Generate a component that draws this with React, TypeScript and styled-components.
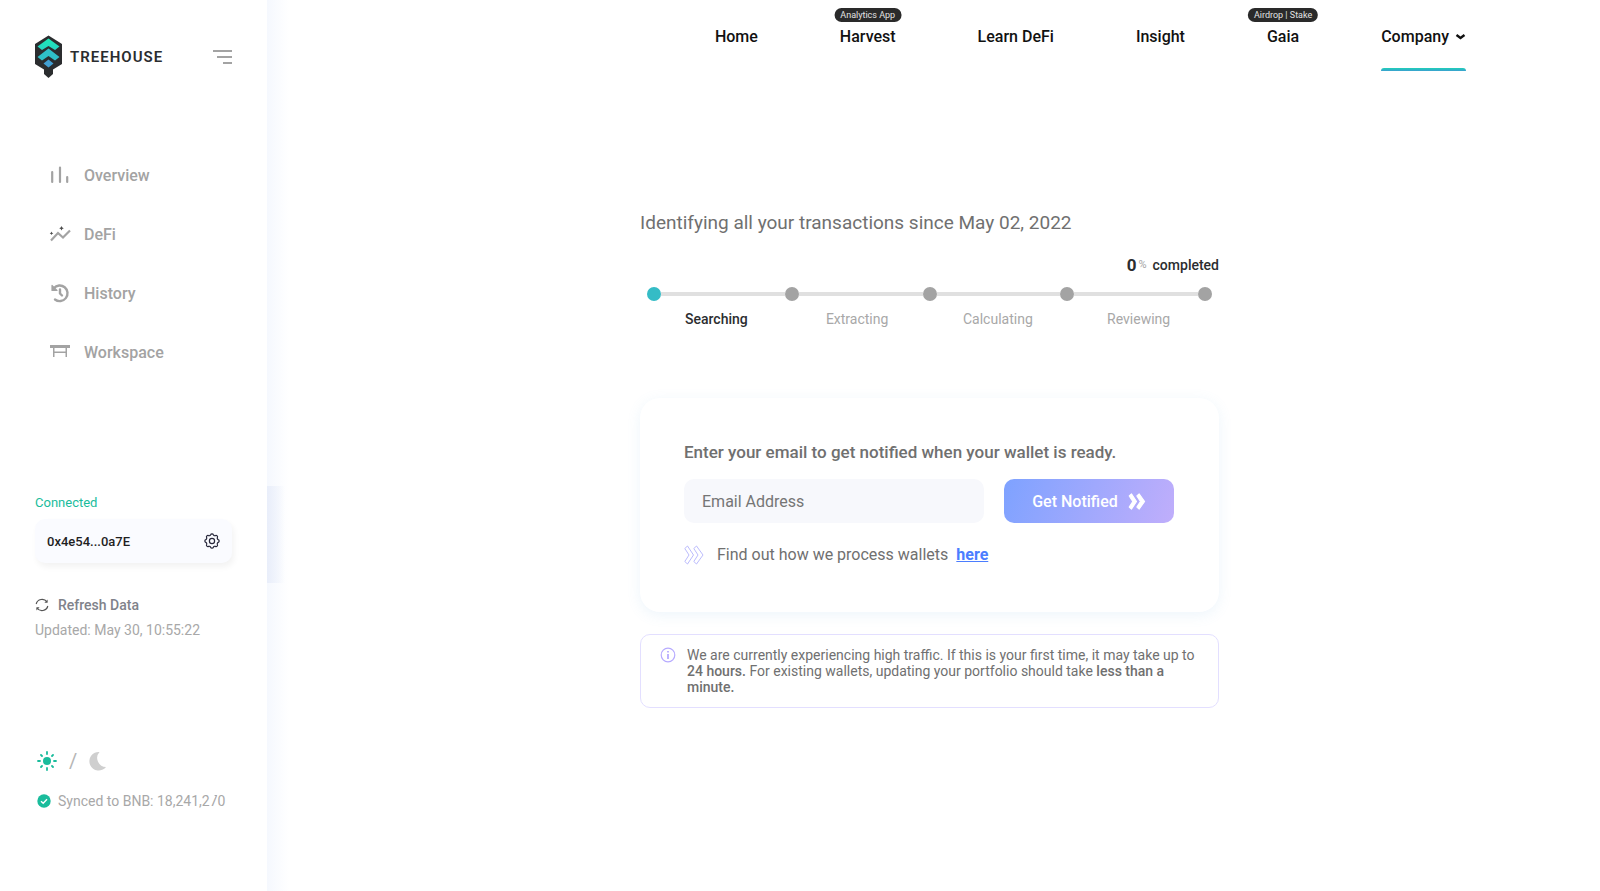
import React from "react";
import styled, { createGlobalStyle, css } from "styled-components";

const GlobalStyle = createGlobalStyle`
  *, *::before, *::after { box-sizing: border-box; }
  body {
    margin: 0;
    background: #fff;
    color: #707070;
    font-family: Roboto, "Liberation Sans", sans-serif;
    font-size: 16px;
  }
  button, input { font: inherit; }
  a { color: inherit; text-decoration: none; }
  h1, h2, p, ul, ol { margin: 0; padding: 0; font-weight: inherit; }
  ul, ol { list-style: none; }
  svg { display: block; flex: none; }
`;

const Page = styled.div`
  display: flex;
  min-height: 100vh;
`;

/* ---------- sidebar ---------- */

const Sidebar = styled.aside`
  display: flex;
  flex-direction: column;
  flex: 0 0 267px;
  padding: 35px 35px 0 35px;
`;

const BrandRow = styled.div`
  display: flex;
  align-items: center;
  height: 43px;
`;

const Brand = styled.a`
  display: flex;
  align-items: center;
  gap: 8px;
  color: #2b2d2f;
  font-size: 15px;
  font-weight: 600;
  letter-spacing: 1px;
`;

const IconButton = styled.button`
  display: flex;
  margin-left: auto;
  padding: 0;
  border: 0;
  background: none;
  cursor: pointer;
`;

const SideNav = styled.nav`
  padding-top: 76px;
  padding-left: 14px;
`;

const SideList = styled.ul`
  display: flex;
  flex-direction: column;
  gap: 17px;
`;

const SideLink = styled.a`
  display: flex;
  align-items: center;
  gap: 13px;
  height: 42px;
  color: #a3a3a3;
  font-weight: 500;
`;

const Wallet = styled.section`
  padding-top: 122px;
`;

const Connected = styled.p`
  color: #1abc9c;
  font-size: 13px;
  line-height: 16px;
`;

const WalletCard = styled.div`
  display: flex;
  align-items: center;
  height: 44px;
  margin-top: 8px;
  padding: 0 12px;
  border-radius: 10px;
  background: #fafbff;
  box-shadow: 2px 4px 6px rgba(0, 0, 0, 0.05);
  color: #1f1f1f;
  font-size: 13px;
  font-weight: 500;
`;

const Refresh = styled.button`
  display: flex;
  align-items: center;
  gap: 9px;
  margin-top: 32px;
  padding: 0;
  border: 0;
  background: none;
  color: #80828a;
  font-size: 14px;
  font-weight: 500;
  line-height: 20px;
  cursor: pointer;
`;

const Updated = styled.p`
  margin-top: 5px;
  color: #a8a8a8;
  font-size: 14px;
  line-height: 20px;
  white-space: nowrap;
`;

const ThemeSwitch = styled.div`
  display: flex;
  align-items: center;
  gap: 12px;
  margin-top: 109px;
  padding-left: 2px;
  color: #b5b5b5;
  font-size: 20px;
  line-height: 24px;
`;

const ThemeButton = styled(IconButton)`
  margin: 0;
`;

const Synced = styled.p`
  display: flex;
  align-items: center;
  gap: 7px;
  margin-top: 18px;
  padding-left: 2px;
  color: #a8a8a8;
  font-size: 14px;
  line-height: 20px;
  white-space: nowrap;
`;

/* a block-counter digit caught while it rolls over */
const RollingDigit = styled.span`
  display: inline-block;
  clip-path: polygon(62% 0, 100% 0, 100% 100%, 0 100%, 0 50%, 62% 34%);
`;

/* ---------- main column ---------- */

const Main = styled.div`
  flex: 1;
  min-width: 0;
  background:
    linear-gradient(90deg, #e9eefa, rgba(255, 255, 255, 0)) 0 486px / 18px 97px no-repeat,
    linear-gradient(90deg, #f5f8fe, #fff) 0 0 / 22px 100% no-repeat;
`;

const TopNav = styled.nav`
  padding-right: 134px;
`;

const TopList = styled.ul`
  display: flex;
  justify-content: flex-end;
  gap: 82px;
`;

const TopLink = styled.a<{ $active?: boolean }>`
  position: relative;
  display: flex;
  align-items: center;
  gap: 6px;
  height: 71px;
  padding-top: 2px;
  color: #111;
  font-weight: 500;
  ${(p) =>
    p.$active &&
    css`
      &::after {
        content: "";
        position: absolute;
        inset: auto 0 0;
        height: 3px;
        border-radius: 3px 3px 0 0;
        background: linear-gradient(#1fd1b8, #3b9fd0);
      }
    `}
`;

const Tag = styled.span`
  position: absolute;
  top: 8px;
  left: 50%;
  transform: translateX(-50%);
  padding: 0 6px;
  border-radius: 8px;
  background: #2a2a2a;
  color: #e2e2e2;
  font-size: 9px;
  font-weight: 400;
  line-height: 14px;
  white-space: nowrap;
`;

const ContentFrame = styled.div`
  padding-right: 8px;
`;

const Content = styled.main`
  width: 100%;
  max-width: 579px;
  margin: 0 auto;
  padding-top: 140px;
`;

const Title = styled.h1`
  font-size: 19px;
  line-height: 24px;
`;

const Completed = styled.p`
  display: flex;
  justify-content: flex-end;
  align-items: center;
  margin-top: 20px;
  color: #2b2d2f;
  font-size: 14px;
  font-weight: 500;
  line-height: 20px;
`;

const Percent = styled.b`
  font-size: 17px;
  font-weight: 700;
`;

const Unit = styled.span`
  margin: 0 6px 0 2px;
  color: #a3a3a3;
  font-size: 11px;
  font-weight: 400;
`;

const Track = styled.div`
  display: flex;
  align-items: center;
  margin-top: 12px;
  padding: 0 7px;
`;

const Dot = styled.span<{ $active?: boolean }>`
  flex: none;
  width: 14px;
  height: 14px;
  border-radius: 50%;
  background: ${(p) => (p.$active ? "#35bcc6" : "#a3a3a3")};
`;

const Segment = styled.span`
  flex: 1;
  height: 4px;
  background: #e0e0e0;
`;

const Steps = styled.ol`
  display: grid;
  grid-template-columns: repeat(4, 1fr);
  margin-top: 8px;
  padding: 0 10px 0 6px;
  font-size: 14px;
  line-height: 20px;
  text-align: center;
`;

const Step = styled.li<{ $active?: boolean }>`
  color: ${(p) => (p.$active ? "#2b2d2f" : "#a8a8a8")};
  font-weight: ${(p) => (p.$active ? 500 : 400)};
`;

const Card = styled.form`
  margin-top: 69px;
  padding: 44px 45px 46px 44px;
  border-radius: 20px;
  background: #fff;
  box-shadow: 0 3px 14px rgba(110, 170, 220, 0.12);
`;

const CardLabel = styled.label`
  display: block;
  font-size: 17px;
  font-weight: 500;
  line-height: 20px;
`;

const FieldRow = styled.div`
  display: flex;
  gap: 20px;
  margin-top: 17px;
`;

const EmailInput = styled.input`
  flex: 1;
  min-width: 0;
  height: 44px;
  padding: 0 18px;
  border: 0;
  border-radius: 10px;
  background: #f7f8fc;
  color: #707070;
  &::placeholder { color: #757575; opacity: 1; }
`;

const Submit = styled.button`
  display: flex;
  align-items: center;
  justify-content: center;
  gap: 10px;
  flex: 0 0 170px;
  height: 44px;
  padding: 0;
  border: 0;
  border-radius: 10px;
  background: linear-gradient(110deg, #7ea2ff, #c0aefb);
  color: #fff;
  font-weight: 500;
  cursor: pointer;
`;

const Hint = styled.p`
  display: flex;
  align-items: center;
  margin-top: 21px;
  line-height: 22px;
`;

const HintText = styled.span`
  margin: 0 8px 0 13px;
`;

const HintLink = styled.a`
  color: #4b7dff;
  font-weight: 700;
  text-decoration: underline;
`;

const Notice = styled.section`
  display: flex;
  gap: 11px;
  margin-top: 22px;
  padding: 12px 19px;
  border: 1px solid #e3dfff;
  border-radius: 10px;
  font-size: 14px;
  line-height: 16px;
`;

const Strong = styled.b`
  font-weight: 500;
`;

/* ---------- drawings ---------- */

const Logo = () => (
  <svg width="27" height="44" viewBox="0 0 27 44" aria-hidden="true">
    <defs>
      <linearGradient id="leaf" x1="0" y1="0" x2="0" y2="1">
        <stop offset="0" stopColor="#1de9b6" />
        <stop offset="1" stopColor="#26d4c4" />
      </linearGradient>
    </defs>
    <path d="M13.500 0.500 27 9v20L18 34.500v4.500L13.500 43 9 39v-4.500L0 29V9z" fill="#2b2d2f" />
    <path d="M13.500 3.500 24.500 11.500 20 15l-6.500-4L7 15l-4.500-3.500z" fill="url(#leaf)" />
    <path d="M13.500 13.500 24.500 22 20 25.500l-6.500-4.500L7 25.500 2.500 22z" fill="#2fc0c8" />
    <path d="M13.500 24.500 18.500 28.500l-5 4-5-4z" fill="#429fd2" />
  </svg>
);

const MenuIcon = () => (
  <svg width="19" height="14" viewBox="0 0 19 14" fill="#a3a3a3">
    <path d="M0 0h19v2H0zM4 6h15v2H4zM10 12h9v2h-9z" />
  </svg>
);

const OverviewIcon = () => (
  <svg width="22" height="22" viewBox="0 0 22 22" stroke="#a3a3a3" strokeWidth="2.200" strokeLinecap="round">
    <path d="M3.200 8v10M11 3.500V18M18.200 13v5" />
  </svg>
);

const DefiIcon = () => (
  <svg width="22" height="22" viewBox="0 0 22 22" fill="none" strokeWidth="2.200">
    <path d="M2 17.500l7-7.500 5 4.500 7-7" stroke="#a3a3a3" />
    <path d="M12.500 3l.8 1.500 1.500.8-1.500.8-.8 1.500-.8-1.500-1.500-.8 1.500-.8zM2.500 8.500l.6 1.200 1.200.6-1.200.6-.6 1.200-.6-1.200-1.200-.6 1.200-.6z" fill="#4c4c4c" />
  </svg>
);

const HistoryIcon = () => (
  <svg width="22" height="22" viewBox="0 0 22 22" fill="none" stroke="#a3a3a3" strokeWidth="2.400" strokeLinecap="round" strokeLinejoin="round">
    <path d="M4.800 6.200A7.800 7.800 0 1 1 6 17.500" />
    <path d="M11 7.500v4l2 2" />
    <path d="M3 3.500v5h5z" fill="#a3a3a3" strokeWidth="1.200" />
  </svg>
);

const WorkspaceIcon = () => (
  <svg width="22" height="22" viewBox="0 0 22 22" fill="#a3a3a3">
    <path d="M1 4h20v3H1zM4 7h1.500v9H4zM16.500 7H18v9h-1.500zM5 10.500h12V12H5z" />
  </svg>
);

const GearIcon = () => (
  <svg width="16" height="16" viewBox="0 0 16 16" fill="none" stroke="#26263a" strokeWidth="1.200">
    <circle cx="8" cy="8" r="2.600" />
    <path d="M6.600 1.800a1.500 1.500 0 0 1 2.800 0 1.500 1.500 0 0 0 2 .8 1.500 1.500 0 0 1 2 2 1.500 1.500 0 0 0 .8 2 1.500 1.500 0 0 1 0 2.800 1.500 1.500 0 0 0-.8 2 1.500 1.500 0 0 1-2 2 1.500 1.500 0 0 0-2 .8 1.500 1.500 0 0 1-2.800 0 1.500 1.500 0 0 0-2-.8 1.500 1.500 0 0 1-2-2 1.500 1.500 0 0 0-.8-2 1.500 1.500 0 0 1 0-2.800 1.500 1.500 0 0 0 .8-2 1.500 1.500 0 0 1 2-2 1.500 1.500 0 0 0 2-.8z" />
  </svg>
);

const RefreshIcon = () => (
  <svg width="14" height="14" viewBox="0 0 14 14" fill="none" stroke="#555" strokeWidth="1.200">
    <path d="M1.200 6A6 6 0 0 1 12 4M12.800 8A6 6 0 0 1 2 10" />
    <path d="M12.600 1.500v3.200H9.400zM1.400 12.500V9.300h3.200z" fill="#555" stroke="none" />
  </svg>
);

const SunIcon = () => (
  <svg width="20" height="20" viewBox="0 0 20 20" stroke="#1abc9c" strokeWidth="1.800" strokeLinecap="round">
    <circle cx="10" cy="10" r="4" fill="#1abc9c" stroke="none" />
    <path d="M10 1v2M10 17v2M1 10h2M17 10h2M4 4l1 1M15 15l1 1M4 16l1-1M15 5l1-1" />
  </svg>
);

const MoonIcon = () => (
  <svg width="18" height="20" viewBox="0 0 18 20">
    <path d="M10.500 1A9.300 9.300 0 1 0 17 16 9 9 0 0 1 10.500 1z" fill="#cfcfcf" />
  </svg>
);

const CheckIcon = () => (
  <svg width="14" height="14" viewBox="0 0 14 14" fill="none">
    <circle cx="7" cy="7" r="6.700" fill="#1abc9c" />
    <path d="M4 7.200l2.200 2L10 5.200" stroke="#fff" strokeWidth="1.400" />
  </svg>
);

const ChevronIcon = () => (
  <svg width="11" height="8" viewBox="0 0 11 8" fill="none">
    <path d="M1.500 2l4 3 4-3" stroke="#111" strokeWidth="2.400" />
  </svg>
);

const DoubleArrow = ({ outline }: { outline?: boolean }) => (
  <svg
    width={outline ? 20 : 18}
    height={outline ? 20 : 17}
    viewBox="0 0 20 20"
    fill={outline ? "none" : "#fff"}
    stroke={outline ? "#aaa9fb" : "#fff"}
    strokeWidth={outline ? 0.8 : 1.2}
    strokeLinejoin="round"
  >
    <path d="M3.500 1 9.500 10l-6 9L.8 16.500 5 10 .8 3.500z" />
    <path d="M12.500 1l6.500 9-6.500 9-2.700-2.500L14 10 9.800 3.500z" />
  </svg>
);

const InfoIcon = () => (
  <svg width="16" height="16" viewBox="0 0 16 16" fill="none" stroke="#b7abff" strokeWidth="1.200">
    <circle cx="8" cy="8" r="6.800" />
    <path d="M8 7v5M8 4v1.600" strokeWidth="1.800" />
  </svg>
);

/* ---------- data ---------- */

const sideItems = [
  { label: "Overview", Icon: OverviewIcon },
  { label: "DeFi", Icon: DefiIcon },
  { label: "History", Icon: HistoryIcon },
  { label: "Workspace", Icon: WorkspaceIcon },
];

const topItems: { label: string; tag?: string; active?: boolean }[] = [
  { label: "Home" },
  { label: "Harvest", tag: "Analytics App" },
  { label: "Learn DeFi" },
  { label: "Insight" },
  { label: "Gaia", tag: "Airdrop | Stake" },
  { label: "Company", active: true },
];

const steps = ["Searching", "Extracting", "Calculating", "Reviewing"];

export default function App() {
  return (
    <Page>
      <GlobalStyle />
      <Sidebar>
        <BrandRow>
          <Brand href="#">
            <Logo />
            TREEHOUSE
          </Brand>
          <IconButton type="button" aria-label="Menu">
            <MenuIcon />
          </IconButton>
        </BrandRow>
        <SideNav>
          <SideList>
            {sideItems.map(({ label, Icon }) => (
              <li key={label}>
                <SideLink href="#">
                  <Icon />
                  {label}
                </SideLink>
              </li>
            ))}
          </SideList>
        </SideNav>
        <Wallet>
          <Connected>Connected</Connected>
          <WalletCard>
            0x4e54...0a7E
            <IconButton type="button" aria-label="Wallet settings">
              <GearIcon />
            </IconButton>
          </WalletCard>
          <Refresh type="button">
            <RefreshIcon />
            Refresh Data
          </Refresh>
          <Updated>Updated: May 30, 10:55:22</Updated>
        </Wallet>
        <ThemeSwitch>
          <ThemeButton type="button" aria-label="Light theme">
            <SunIcon />
          </ThemeButton>
          /
          <ThemeButton type="button" aria-label="Dark theme">
            <MoonIcon />
          </ThemeButton>
        </ThemeSwitch>
        <Synced>
          <CheckIcon />
          <span>
            Synced to BNB: 18,241,2<RollingDigit>7</RollingDigit>0
          </span>
        </Synced>
      </Sidebar>

      <Main>
        <TopNav>
          <TopList>
            {topItems.map((item) => (
              <li key={item.label}>
                <TopLink href="#" $active={item.active}>
                  {item.tag && <Tag>{item.tag}</Tag>}
                  {item.label}
                  {item.active && <ChevronIcon />}
                </TopLink>
              </li>
            ))}
          </TopList>
        </TopNav>
        <ContentFrame>
          <Content>
            <Title>Identifying all your transactions since May 02, 2022</Title>
            <Completed>
              <Percent>0</Percent>
              <Unit>%</Unit>
              completed
            </Completed>
            <Track>
              <Dot $active />
              {steps.map((step) => (
                <React.Fragment key={step}>
                  <Segment />
                  <Dot />
                </React.Fragment>
              ))}
            </Track>
            <Steps>
              {steps.map((step, i) => (
                <Step key={step} $active={i === 0}>
                  {step}
                </Step>
              ))}
            </Steps>
            <Card>
              <CardLabel htmlFor="email">Enter your email to get notified when your wallet is ready.</CardLabel>
              <FieldRow>
                <EmailInput id="email" type="email" placeholder="Email Address" />
                <Submit type="button">
                  Get Notified
                  <DoubleArrow />
                </Submit>
              </FieldRow>
              <Hint>
                <DoubleArrow outline />
                <HintText>Find out how we process wallets</HintText>
                <HintLink href="#">here</HintLink>
              </Hint>
            </Card>
            <Notice>
              <InfoIcon />
              <p>
                We are currently experiencing high traffic. If this is your first time, it may take up to{" "}
                <Strong>24 hours.</Strong> For existing wallets, updating your portfolio should take{" "}
                <Strong>less than a minute.</Strong>
              </p>
            </Notice>
          </Content>
        </ContentFrame>
      </Main>
    </Page>
  );
}
